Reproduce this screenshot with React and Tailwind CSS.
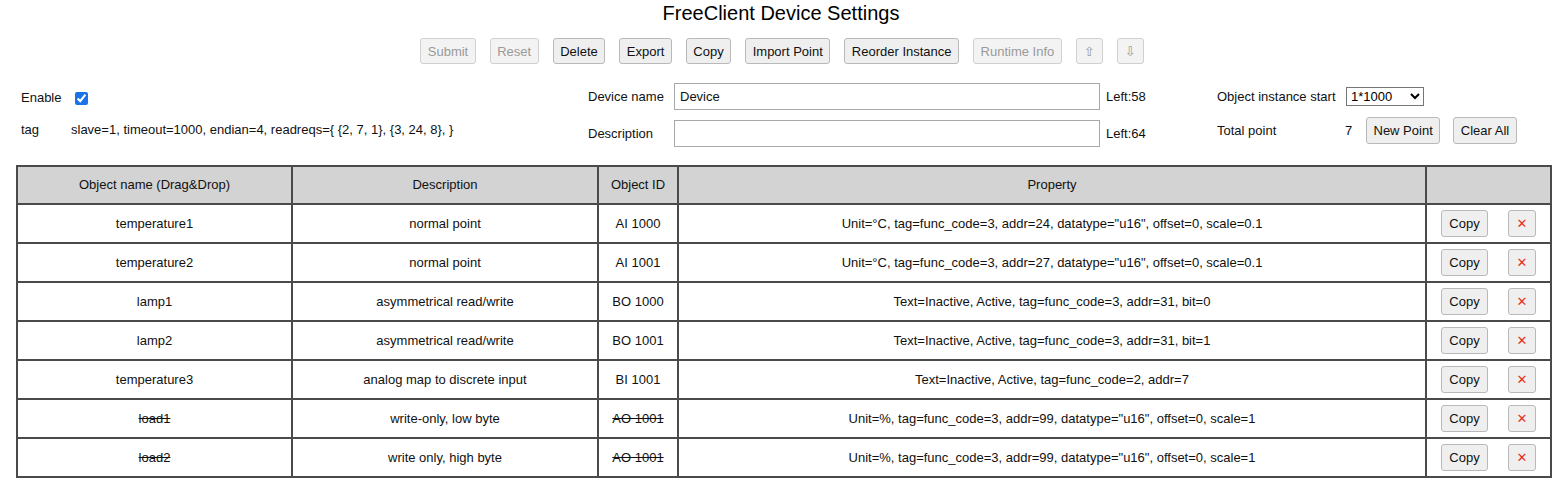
import React from "react";

const toolbar = [
  { label: "Submit", disabled: true },
  { label: "Reset", disabled: true },
  { label: "Delete" },
  { label: "Export" },
  { label: "Copy" },
  { label: "Import Point" },
  { label: "Reorder Instance" },
  { label: "Runtime Info", disabled: true },
  { label: "⇧", disabled: true, arrow: true },
  { label: "⇩", disabled: true, arrow: true },
];

const rows = [
  ["temperature1", "normal point", "AI 1000", 'Unit=°C, tag=func_code=3, addr=24, datatype="u16", offset=0, scale=0.1', false],
  ["temperature2", "normal point", "AI 1001", 'Unit=°C, tag=func_code=3, addr=27, datatype="u16", offset=0, scale=0.1', false],
  ["lamp1", "asymmetrical read/write", "BO 1000", "Text=Inactive, Active, tag=func_code=3, addr=31, bit=0", false],
  ["lamp2", "asymmetrical read/write", "BO 1001", "Text=Inactive, Active, tag=func_code=3, addr=31, bit=1", false],
  ["temperature3", "analog map to discrete input", "BI 1001", "Text=Inactive, Active, tag=func_code=2, addr=7", false],
  ["load1", "write-only, low byte", "AO 1001", 'Unit=%, tag=func_code=3, addr=99, datatype="u16", offset=0, scale=1', true],
  ["load2", "write only, high byte", "AO 1001", 'Unit=%, tag=func_code=3, addr=99, datatype="u16", offset=0, scale=1', true],
];

function Btn({ children, disabled, className = "" }) {
  return (
    <button
      className={
        "h-[26px] px-[6.5px] border border-[#b9b9b9] rounded-[3px] bg-[#efefef] text-[13px] leading-none " +
        (disabled ? "text-[#9a9a9a] border-[#d0d0d0] bg-[#f3f3f3] " : "text-[#111] ") +
        className
      }
    >
      {children}
    </button>
  );
}

export default function App() {
  return (
    <div className="w-[1562px] h-[494px] bg-white text-[#111] text-[13px] font-['Liberation_Sans',Arial,sans-serif]">
      <div className="h-[26px] leading-[26px] text-center text-[20px] text-black">FreeClient Device Settings</div>

      <div className="mt-[12px] flex justify-center gap-[14px] pl-[2px]">
        {toolbar.map((b) => (
          <Btn
            key={b.label}
            disabled={b.disabled}
            className={b.arrow ? "w-[27px] px-0 font-['DejaVu_Sans',sans-serif] text-[12px]" : ""}
          >
            {b.label}
          </Btn>
        ))}
      </div>

      <div className="mt-[19px] flex h-[64px]">
        <div className="w-[588px] pl-[21px] pt-[2px] flex flex-col gap-[6px]">
          <div className="h-[26px] flex items-center">
            <span className="w-[50px]">Enable</span>
            <input type="checkbox" defaultChecked className="w-[13px] h-[13px] ml-[4px] accent-[#1a73e8]" />
          </div>
          <div className="h-[26px] flex items-center">
            <span className="w-[50px]">tag</span>
            <span>slave=1, timeout=1000, endian=4, readreqs={"{"} {"{"}2, 7, 1{"}"}, {"{"}3, 24, 8{"}"}, {"}"}</span>
          </div>
        </div>

        <div className="w-[629px] flex flex-col gap-[10px]">
          <div className="h-[27px] flex items-center">
            <span className="w-[86px]">Device name</span>
            <input
              defaultValue="Device"
              className="w-[426px] h-[27px] border border-[#a8a8a8] px-[5px] text-[13px] outline-none font-['Liberation_Sans',Arial,sans-serif]"
            />
            <span className="ml-[6px]">Left:58</span>
          </div>
          <div className="h-[27px] flex items-center">
            <span className="w-[86px]">Description</span>
            <input className="w-[426px] h-[27px] border border-[#a8a8a8] px-[5px] text-[13px] outline-none" />
            <span className="ml-[6px]">Left:64</span>
          </div>
        </div>

        <div className="flex-1 flex flex-col gap-[7px]">
          <div className="h-[27px] flex items-center">
            <span className="w-[129px]">Object instance start</span>
            <select className="w-[78px] h-[19px] border border-[#767676] text-[13px] bg-white text-black font-['Liberation_Sans',Arial,sans-serif]">
              <option>1*1000</option>
            </select>
          </div>
          <div className="h-[27px] flex items-center">
            <span className="w-[128px]">Total point</span>
            <span className="w-[21px]">7</span>
            <Btn className="h-[27px]">New Point</Btn>
            <Btn className="h-[27px] ml-[13px]">Clear All</Btn>
          </div>
        </div>
      </div>

      <div className="mt-[18px] ml-[16px] w-[1534px]">
        <table className="w-[1534px] table-fixed border-collapse border-2 border-[#4a4a4a]">
          <colgroup>
            <col className="w-[275px]" />
            <col className="w-[306px]" />
            <col className="w-[80px]" />
            <col className="w-[748px]" />
            <col className="w-[125px]" />
          </colgroup>
          <thead>
            <tr className="bg-[#d3d3d3] h-[38px]">
              {["Object name (Drag&Drop)", "Description", "Object ID", "Property", ""].map((h, i) => (
                <th key={i} className="border-2 border-[#4a4a4a] font-normal text-center p-0">
                  {h}
                </th>
              ))}
            </tr>
          </thead>
          <tbody>
            {rows.map((r, i) => (
              <tr key={i} className="h-[39px]">
                <td className={"border-2 border-[#4a4a4a] text-center p-0 " + (r[4] ? "line-through" : "")}>{r[0]}</td>
                <td className="border-2 border-[#4a4a4a] text-center p-0">{r[1]}</td>
                <td className={"border-2 border-[#4a4a4a] text-center p-0 " + (r[4] ? "line-through" : "")}>{r[2]}</td>
                <td className="border-2 border-[#4a4a4a] text-center p-0">{r[3]}</td>
                <td className="border-2 border-[#4a4a4a] p-0">
                  <div className="flex justify-center items-center gap-[20px]">
                    <Btn className="h-[27px] w-[47px] px-0">Copy</Btn>
                    <Btn className="h-[27px] w-[28px] px-0 text-[#e8321e] font-['DejaVu_Sans',sans-serif] text-[11px]">✕</Btn>
                  </div>
                </td>
              </tr>
            ))}
          </tbody>
        </table>
      </div>
    </div>
  );
}
